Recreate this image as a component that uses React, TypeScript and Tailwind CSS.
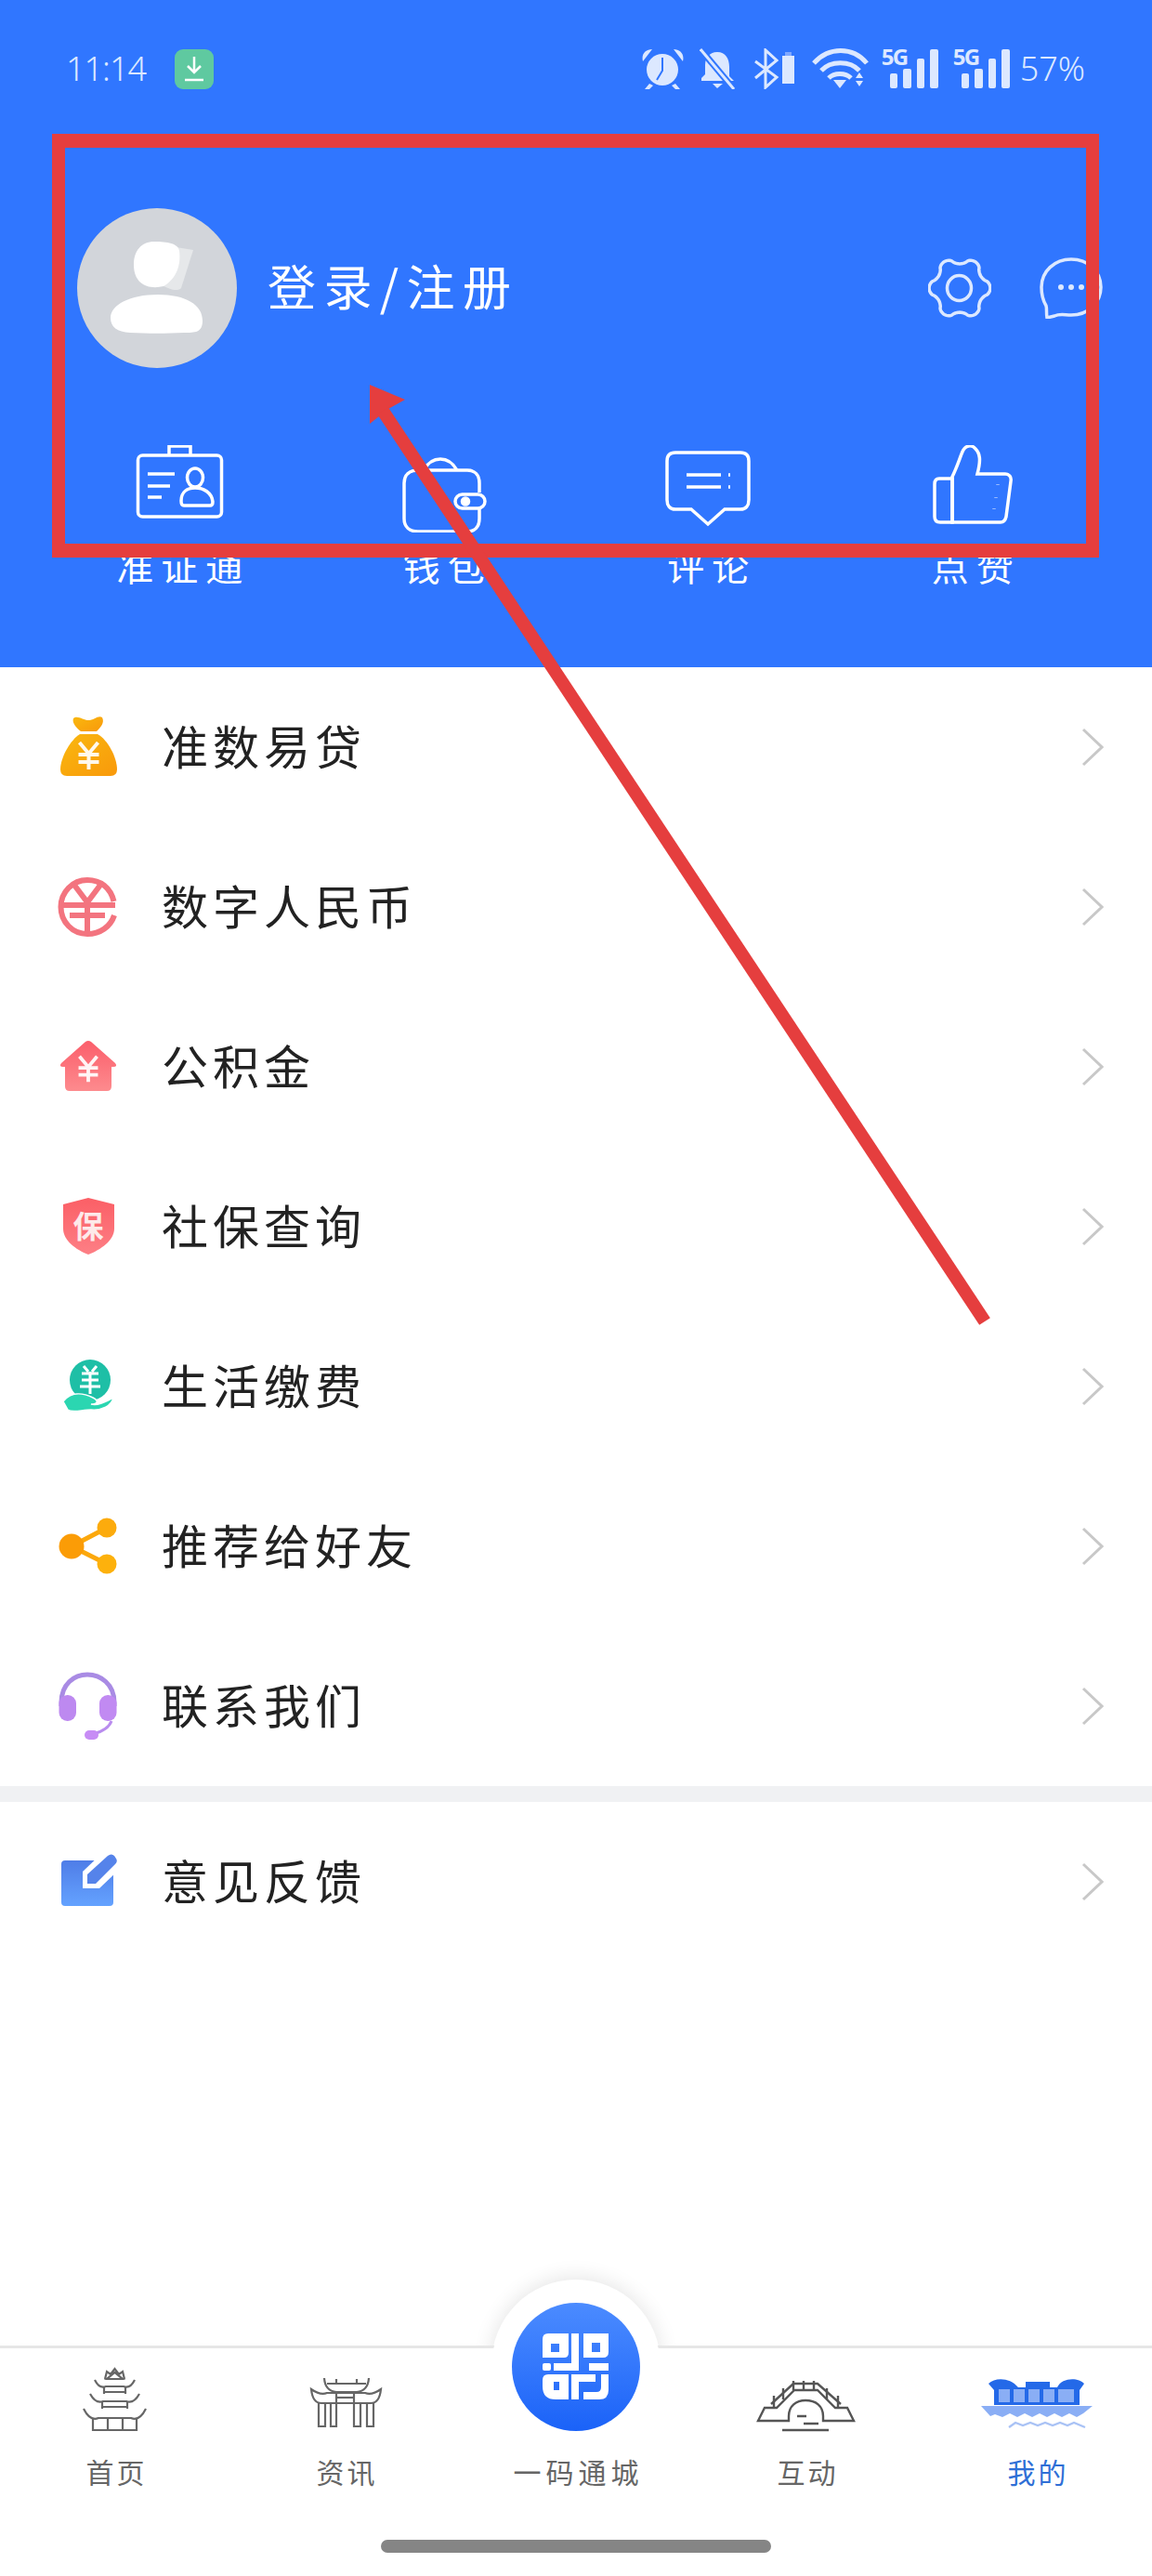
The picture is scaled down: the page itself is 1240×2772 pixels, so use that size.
import type { ReactNode } from "react";

const rows = ["准数易贷", "数字人民币", "公积金", "社保查询", "生活缴费", "推荐给好友", "联系我们"];
const shortcuts = ["准证通", "钱包", "评论", "点赞"];
const STATUS = "#dce8ff";

function gearPath(cx: number, cy: number, r: number, a: number) {
  const pts: string[] = [];
  for (let i = 0; i < 180; i++) {
    const t = (i / 180) * Math.PI * 2;
    const c = Math.cos(6 * t);
    const rr = r + a * Math.sign(c) * Math.pow(Math.abs(c), 0.7);
    pts.push(`${(cx + rr * Math.cos(t)).toFixed(2)} ${(cy + rr * Math.sin(t)).toFixed(2)}`);
  }
  return `M${pts.join("L")}Z`;
}

function Yen({ x, y, s = 1, color = "#fff" }: { x: number; y: number; s?: number; color?: string }) {
  return (
    <g transform={`translate(${x} ${y}) scale(${s})`} fill="none" stroke={color} strokeWidth={4} strokeOpacity={0.92}>
      <path d="M-10 -14L0 -2L10 -14M-11 -1H11M-11 7H11M0 -2V15" />
    </g>
  );
}

function StatusIcons() {
  return (
    <div className="flex items-center">
      {/* alarm */}
      <svg className="h-[44px] w-[45px]" viewBox="689 52 45 44" fill={STATUS}>
        <circle cx="711" cy="75" r="17" />
        <path d="M690 66C688 58 693 53 700 53ZM733 66C735 58 730 53 723 53ZM697 90L692 96H697L701 92ZM725 90L730 96H725L721 92Z" />
        <path d="M711 62V76L705 86" fill="none" stroke="#3076ff" strokeWidth="2" />
      </svg>
      {/* muted bell */}
      <svg className="ml-[17px] h-[44px] w-[39px]" viewBox="751 52 39 44" fill={STATUS}>
        <path d="M770 56C779 56 783 63 783 72V82L788 87H753V84L757 80V70C757 62 762 56 770 56Z" />
        <path d="M765 90H776L770 95Z" />
        <path d="M752 53L788 96" stroke="#3076ff" strokeWidth="7" />
        <path d="M752 53L788 96" stroke={STATUS} strokeWidth="3" />
      </svg>
      {/* bluetooth + battery */}
      <svg className="ml-[20px] h-[44px] w-[43px]" viewBox="810 52 43 44" fill="none" stroke={STATUS} strokeWidth="3">
        <path d="M811 66L834 83L822 94V54L834 65L811 84" />
        <path d="M840 60H853V90H840Z" fill={STATUS} stroke="none" />
        <path d="M843 56H850V60H843Z" fill="#7fa8ff" stroke="none" />
      </svg>
      {/* wifi */}
      <svg className="ml-[19px] h-[44px] w-[61px]" viewBox="872 52 61 44" fill="none" stroke={STATUS} strokeWidth="5">
        <path d="M874 68C890 50 916 50 931 68" />
        <path d="M882 76C892 65 913 65 923 76" />
        <path d="M890 84C896 78 908 78 914 84" />
        <path d="M895 86H909L902 95Z" fill={STATUS} stroke="none" />
        <path d="M923 78L927 84H919ZM919 87H927L923 93Z" fill={STATUS} stroke="none" />
      </svg>
      {[0, 1].map((i) => (
        <div key={i} className={i === 0 ? "relative ml-[14px] h-[44px] w-[61px]" : "relative ml-[16px] h-[44px] w-[61px]"}>
          <span className="absolute left-0 top-[-7px] font-['Noto_Sans',sans-serif] text-[24px] font-bold leading-[32px] tracking-[-1.5px] text-[#dce8ff]">5G</span>
          <div className="absolute bottom-[1px] right-0 flex items-end gap-[6px]">
            <div className="h-[16px] w-[8.5px] rounded-[2px] bg-[#dce8ff]" />
            <div className="h-[21px] w-[8.5px] rounded-[2px] bg-[#dce8ff]" />
            <div className="h-[32px] w-[8.5px] rounded-[2px] bg-[#dce8ff]" />
            <div className="h-[42px] w-[8.5px] rounded-[2px] bg-[#dce8ff]" />
          </div>
        </div>
      ))}
      <span className="ml-[11px] font-['Noto_Sans',sans-serif] text-[36px] font-light leading-[44px] text-[#dce8ff]">57%</span>
    </div>
  );
}

const shortcutIcons: ReactNode[] = [
  <g key="id">
    <rect x="148.5" y="490" width="90" height="66" rx="5" />
    <path d="M182 490V480H205V490" />
    <path d="M159 510H188M159 523H183M159 535H174" />
    <ellipse cx="210" cy="514" rx="8.5" ry="10" />
    <path d="M195 539C195 529 202 525 210 525C219 525 228 530 229 540C229 543 228 544 226 544H198C196 544 195 542 195 539Z" />
  </g>,
  <g key="wallet">
    <path d="M515 530V520C515 511 510 506 502 506H449C440 506 434 511 434 520V558C434 567 440 572 449 572H502C510 572 515 567 515 558V546" />
    <path d="M455 506C460 497 466 494 473 494C481 494 487 499 491 506" />
    <rect x="489" y="532" width="32" height="15" rx="7.5" />
    <circle cx="500" cy="539.5" r="3.5" fill="#fff" />
  </g>,
  <g key="comment">
    <path d="M727 487H797C803 487 806 490 806 496V538C806 544 803 548 797 548H780L762 564L744 548H727C721 548 718 544 718 538V496C718 490 721 487 727 487Z" />
    <path d="M739 511H776M739 524H776" />
    <path d="M784 511H786M784 524H786" />
  </g>,
  <g key="thumb">
    <path d="M1025 515H1011C1007 515 1006 518 1006 521V556C1006 560 1008 562 1012 562H1025Z" />
    <path d="M1025 562V513C1030 503 1033 493 1036 486C1039 479 1046 478 1050 483C1055 488 1056 495 1052 510H1082C1086 510 1089 513 1088 518L1083 556C1082 560 1080 562 1077 562Z" />
    <path d="M1074 521V521.5M1072 535V535.5M1070 547V547.5" />
  </g>,
];
const shortcutBoxes = ["133 479 120 94", "417 479 120 94", "702 479 120 94", "987 479 120 94"];

const listIcons: ReactNode[] = [
  <svg key="bag" className="h-[72px] w-[66px]" viewBox="62 768 66 72">
    <defs>
      <linearGradient id="bag" x1="0" y1="0" x2="1" y2="1">
        <stop offset="0" stopColor="#f9b80f" />
        <stop offset="1" stopColor="#f9990b" />
      </linearGradient>
    </defs>
    <path fill="url(#bag)" d="M79 773C83 769 90 775 95 775C101 775 106 769 110 772C113 778 108 783 104 787H87C83 784 77 778 79 773Z" />
    <path fill="url(#bag)" d="M86 790H105C116 796 126 815 126 828Q126 835 119 835H72Q65 835 65 828C65 815 76 796 86 790Z" />
    <Yen x={95.5} y={813} />
  </svg>,
  <svg key="rmb" className="h-[72px] w-[66px]" viewBox="62 940 66 72" fill="none" stroke="#f3747f" strokeWidth="6">
    <path d="M122.5 970C119 955 108 947 94 947C78 947 65.5 960 65.5 976C65.5 992 78 1005 94 1005C108 1005 119 997 123 985" />
    <path d="M79 951L94 971L109 951M66 974H124M75 985H113M94 971V1005" />
  </svg>,
  <svg key="house" className="h-[72px] w-[66px]" viewBox="62 1112 66 72">
    <defs>
      <linearGradient id="house" x1="0" y1="0" x2="0" y2="1">
        <stop offset="0" stopColor="#fb5e6b" />
        <stop offset="1" stopColor="#fd8b8e" />
      </linearGradient>
    </defs>
    <path fill="url(#house)" d="M92 1121Q95 1119 98 1121L124 1144Q127 1148 122 1148H120V1169Q120 1174 115 1174H75Q70 1174 70 1169V1148H68Q63 1148 66 1144Z" />
    <Yen x={95} y={1150} s={0.95} />
  </svg>,
  <svg key="shield" className="h-[72px] w-[66px]" viewBox="62 1284 66 72">
    <defs>
      <linearGradient id="shield" x1="0" y1="0" x2="0" y2="1">
        <stop offset="0" stopColor="#fb5f66" />
        <stop offset="1" stopColor="#fd7f85" />
      </linearGradient>
    </defs>
    <path fill="url(#shield)" d="M95 1289L123 1296V1322C123 1335 108 1345 95 1350C82 1345 68 1335 68 1322V1296Z" />
    <text x="95" y="1332" textAnchor="middle" fontSize="33" fontWeight="700" fill="#fdeaea">保</text>
  </svg>,
  <svg key="hand" className="h-[72px] w-[66px]" viewBox="62 1456 66 72">
    <circle cx="97" cy="1485" r="22" fill="#1ebfa6" />
    <path d="M90 1470L95 1476M104 1470L99 1476M88 1478H106M88 1485H106M86 1492H108M97 1476V1500" fill="none" stroke="#fff" strokeWidth="3" />
    <path d="M68 1508C76 1498 88 1498 100 1504C106 1507 106 1511 98 1511C106 1513 114 1508 122 1504C120 1513 110 1518 98 1517C88 1517 78 1521 73 1517Z" fill="#2bd6b1" stroke="#fff" strokeWidth="1.5" />
  </svg>,
  <svg key="share" className="h-[72px] w-[66px]" viewBox="62 1628 66 72">
    <path d="M77 1664L115 1644M77 1664L115 1683" stroke="#fca80c" strokeWidth="5" fill="none" />
    <circle cx="77" cy="1664" r="13.5" fill="#fb9c06" />
    <circle cx="115" cy="1644" r="10.5" fill="#fcab0d" />
    <circle cx="115" cy="1683" r="10.5" fill="#fdb10c" />
  </svg>,
  <svg key="headset" className="h-[76px] w-[66px]" viewBox="62 1798 66 76">
    <path d="M66 1836V1832C66 1812 80 1802 94 1802C108 1802 123 1812 123 1832V1836" fill="none" stroke="#a98be4" strokeWidth="5" />
    <rect x="63.5" y="1824" width="18.5" height="28" rx="9" fill="#bd89f0" />
    <rect x="107" y="1824" width="18.5" height="28" rx="9" fill="#c18af2" />
    <path d="M120 1852C117 1860 108 1864 100 1866" fill="none" stroke="#b98cee" strokeWidth="3" />
    <rect x="91" y="1862" width="15" height="10" rx="5" fill="#c78cf5" />
  </svg>,
];

const feedbackIcon = (
  <svg className="h-[72px] w-[66px]" viewBox="62 1989 66 72">
    <defs>
      <linearGradient id="note" x1="0" y1="0" x2="0" y2="1">
        <stop offset="0" stopColor="#4f7de7" />
        <stop offset="1" stopColor="#64a2ff" />
      </linearGradient>
    </defs>
    <rect x="66" y="2002" width="56" height="49" rx="4" fill="url(#note)" />
    <path d="M89 2032V2014L112 1992L130 2010L107 2032Z" fill="#fff" />
    <path d="M94 2027V2017L116 1997Q120 1994 123 1997L125 2000Q127 2003 124 2006L103 2027Z" fill="#5583ea" />
  </svg>
);

function Chevron() {
  return (
    <svg className="h-[44px] w-[24px]" viewBox="0 0 24 44" fill="none" stroke="#c8c8c8" strokeWidth="3">
      <path d="M2 3L22 22L2 41" />
    </svg>
  );
}

function Row({ icon, label }: { icon: ReactNode; label: string }) {
  return (
    <div className="flex h-[172px] items-center pl-[62px] pr-[52px]">
      <div className="flex w-[66px] justify-center">{icon}</div>
      <span className="ml-[46px] flex-1 pb-[6px] text-[50px] leading-[60px] tracking-[5px] text-[#222]">{label}</span>
      <Chevron />
    </div>
  );
}

const navItems: { label: string; icon?: ReactNode; active?: boolean }[] = [
  {
    label: "首页",
    icon: (
      <svg className="h-[72px] w-[80px]" viewBox="84 2545 80 72" fill="none" stroke="#666" strokeWidth="2.2">
        <path d="M113 2560L115 2552L119 2555L123.5 2549L128 2555L132 2552L134 2560M115 2560H132L123.5 2553Z" />
        <path d="M102 2561Q107 2571 114 2568H133Q140 2571 145 2561" />
        <path d="M112 2568V2576M135 2568V2576M112 2574H135" />
        <path d="M97 2576Q103 2587 111 2584H136Q144 2587 150 2576" />
        <path d="M110 2584V2592M137 2584V2592M110 2590H137" />
        <path d="M90 2592Q97 2606 106 2602H141Q150 2606 157 2592" />
        <path d="M100 2602V2615H147V2602M116 2602V2615M132 2602V2615" />
      </svg>
    ),
  },
  {
    label: "资讯",
    icon: (
      <svg className="h-[72px] w-[80px]" viewBox="332 2545 80 72" fill="none" stroke="#666" strokeWidth="2.2">
        <path d="M349 2559Q350 2573 362 2574H384Q396 2573 397 2559M352 2565H394M362 2560V2565M384 2560V2565" />
        <path d="M335 2571Q345 2578 352 2575H393Q400 2578 410 2571C409 2581 405 2586 399 2586H346C340 2586 336 2581 335 2571Z" />
        <path d="M343 2586V2611H350V2586M356 2586V2611H362V2575M381 2575V2611H388V2586M395 2586V2611H402V2586" />
        <path d="M362 2580H381" />
      </svg>
    ),
  },
  { label: "一码通城" },
  {
    label: "互动",
    icon: (
      <svg className="h-[72px] w-[108px]" viewBox="814 2545 108 72" fill="none" stroke="#555" strokeWidth="2.4">
        <path d="M816 2605L823 2591H836L855 2572H880L899 2591H912L919 2605H886V2600C886 2589 878 2583 867 2583C857 2583 849 2589 849 2600V2605Z" />
        <path d="M830 2587L854 2565H880L905 2587" />
        <path d="M833 2578V2592M843 2570V2582M854 2562V2572M865 2562V2572M876 2562V2572M890 2570V2582M902 2578V2592" />
        <path d="M858 2600H868M865 2608H881M842 2615H892" />
      </svg>
    ),
  },
  {
    label: "我的",
    active: true,
    icon: (
      <svg className="h-[72px] w-[124px]" viewBox="1053 2545 124 72">
        <path d="M1063 2565C1070 2558 1086 2558 1095 2569H1137C1142 2558 1160 2558 1166 2565L1161 2572V2588H1069V2572Z" fill="#2469e8" />
        <rect x="1103" y="2563" width="26" height="8" fill="#2469e8" />
        <path d="M1074 2571H1086V2585H1074ZM1090 2571H1102V2585H1090ZM1106 2571H1118V2585H1106ZM1122 2571H1134V2585H1122ZM1138 2571H1155V2585H1138Z" fill="#8aaef5" />
        <path d="M1055 2589H1175L1165 2597L1158 2601L1150 2597L1142 2601L1134 2597L1126 2601L1118 2597L1110 2601L1102 2597L1094 2601L1086 2597L1078 2601L1070 2598L1065 2600Z" fill="#8aaef5" />
        <path d="M1085 2612L1092 2607L1100 2610L1108 2607L1116 2610L1124 2607L1132 2610L1140 2607L1148 2610L1155 2607L1167 2612" fill="none" stroke="#a9c2f5" strokeWidth="2.4" />
      </svg>
    ),
  },
];

function QrGlyph() {
  return (
    <svg className="h-[72px] w-[72px]" viewBox="583 2509 72 72" fill="#fff" fillRule="evenodd">
      <path d="M589 2509H611V2530Q611 2535 606 2535H583V2515Q583 2509 589 2509ZM592 2520V2529H601V2520Z" />
      <path d="M614 2509H622V2549H595V2541H614Z" />
      <rect x="583" y="2541" width="9" height="8" rx="2" />
      <path d="M627 2509H654V2529Q654 2535 648 2535H627ZM636 2519V2529H645V2519Z" />
      <path d="M633 2541H654V2549H633Z" />
      <path d="M589 2553H611V2580H597Q583 2580 583 2566V2559Q583 2553 589 2553ZM595 2561V2570H601V2561Z" />
      <path d="M614 2553H640V2561H622V2580H614Z" />
      <path d="M646 2553H654V2570Q654 2580 644 2580H627V2572H641Q646 2572 646 2567Z" />
    </svg>
  );
}

function BottomNav() {
  return (
    <div className="relative">
      <div className="absolute left-1/2 top-[-71px] h-[182px] w-[182px] -translate-x-1/2 rounded-full shadow-[0_-2px_22px_rgba(0,0,0,0.11)]" />
      <nav className="relative h-[248px] border-t-[3px] border-[#e6e6e6] bg-white">
        <div className="absolute left-1/2 top-[-71px] flex h-[182px] w-[182px] -translate-x-1/2 items-center justify-center rounded-full bg-white">
          <div className="flex h-[138px] w-[138px] items-center justify-center rounded-full bg-gradient-to-b from-[#4b8bff] to-[#1a62f8]">
            <QrGlyph />
          </div>
        </div>
        <div className="relative grid grid-cols-5 pt-[18px]">
          {navItems.map((item) => (
            <div key={item.label} className="flex flex-col items-center">
              <div className="flex h-[72px] items-end justify-center">{item.icon}</div>
              <span className={item.active ? "mt-[22px] pl-[3px] text-[30px] leading-[40px] tracking-[3px] text-[#2f6fd6]" : item.icon ? "mt-[22px] pl-[3px] text-[30px] leading-[40px] tracking-[3px] text-[#666]" : "mt-[22px] pl-[5px] text-[30px] leading-[40px] tracking-[5px] text-[#666]"}>
                {item.label}
              </span>
            </div>
          ))}
        </div>
        <div className="absolute bottom-[25px] left-1/2 h-[14px] w-[420px] -translate-x-1/2 rounded-full bg-[#858585]" />
      </nav>
    </div>
  );
}

export default function App() {
  return (
    <div className="relative flex h-[2772px] w-[1240px] flex-col overflow-hidden bg-white font-['Noto_Sans_CJK_SC','Noto_Sans',sans-serif]">
      <header className="h-[718px] shrink-0 bg-[#3076ff] pt-[52px]">
        <div className="flex h-[44px] items-center justify-between pl-[71px] pr-[72px]">
          <div className="flex items-center">
            <span className="font-['Noto_Sans',sans-serif] text-[36px] font-light leading-[44px] tracking-[-1px] text-[#dce8ff]">11:14</span>
            <div className="ml-[31px] flex h-[43px] w-[42px] items-center justify-center rounded-[9px] bg-[#5fc9a0]">
              <svg className="h-[30px] w-[24px]" viewBox="0 0 24 30" fill="none" stroke="#fff" strokeWidth="2.5">
                <path d="M12 2V19M5 12L12 19L19 12M2 27H22" />
              </svg>
            </div>
          </div>
          <StatusIcons />
        </div>

        <div className="mt-[128px] flex h-[172px] items-center pl-[83px] pr-[53px]">
          <svg className="h-[172px] w-[172px] shrink-0" viewBox="83 224 172 172">
            <circle cx="169" cy="310" r="86" fill="#d2d5da" />
            <path d="M171 263L208 269L195 310C190 315 180 310 170 305Z" fill="#e6e8ea" />
            <path d="M166 260C180 260 192 262 193 270C195 285 190 300 176 308C160 312 144 306 144 285C144 270 152 260 166 260Z" fill="#fff" />
            <path d="M170 317C200 317 218 328 218 345C218 358 210 358 198 358C178 359 160 359 140 358C126 357 119 352 119 342C119 328 140 317 170 317Z" fill="#fff" />
          </svg>
          <span className="ml-[33px] flex-1 pb-[6px] text-[52px] leading-[60px] tracking-[8.4px] text-white">登录/注册</span>
          <svg className="h-[64px] w-[68px] shrink-0" viewBox="999 277 68 64" fill="none" stroke="#dce8ff" strokeWidth="3.5">
            <path d={gearPath(1033, 309, 29.5, 3.4)} />
            <ellipse cx="1032.5" cy="309" rx="13" ry="13.5" />
          </svg>
          <svg className="ml-[52px] h-[66px] w-[68px] shrink-0" viewBox="1119 277 68 66" fill="#dce8ff">
            <path d="M1153 279C1171 279 1185 292 1185 309C1185 326 1171 339 1153 339C1146 339 1141 337 1135 340L1127 342C1126 336 1127 332 1126 329C1123 324 1121 316 1121 309C1121 292 1135 279 1153 279Z" fill="none" stroke="#dce8ff" strokeWidth="3.5" />
            <circle cx="1142" cy="309" r="3" />
            <circle cx="1153" cy="309" r="3" />
            <circle cx="1164" cy="309" r="3" />
          </svg>
        </div>

        <div className="mt-[83px] grid grid-cols-4 px-[51px]">
          {shortcuts.map((label, i) => (
            <div key={label} className="flex flex-col items-center">
              <svg className="h-[94px] w-[120px]" viewBox={shortcutBoxes[i]} fill="none" stroke="#fff" strokeWidth="3.5">
                {shortcutIcons[i]}
              </svg>
              <span className="mt-[10px] pl-[8px] text-[40px] leading-[50px] tracking-[8px] text-white">{label}</span>
            </div>
          ))}
        </div>
      </header>

      <section className="flex-1">
        {rows.map((label, i) => (
          <Row key={label} label={label} icon={listIcons[i]} />
        ))}
        <div className="h-[17px] bg-[#f0f1f3]" />
        <Row label="意见反馈" icon={feedbackIcon} />
      </section>

      <BottomNav />

      {/* screenshot annotation */}
      <div className="pointer-events-none absolute left-[56px] top-[144px] h-[456px] w-[1127px] border-x-[14px] border-y-[15px] border-[#e53e3e]" />
      <svg className="pointer-events-none absolute left-0 top-0 h-[2772px] w-[1240px]" viewBox="0 0 1240 2772">
        <path d="M398 414L436 430L418 440L398 456Z" fill="#e53e3e" />
        <path d="M412 442L1060 1422" fill="none" stroke="#e53e3e" strokeWidth="14" />
      </svg>
    </div>
  );
}
